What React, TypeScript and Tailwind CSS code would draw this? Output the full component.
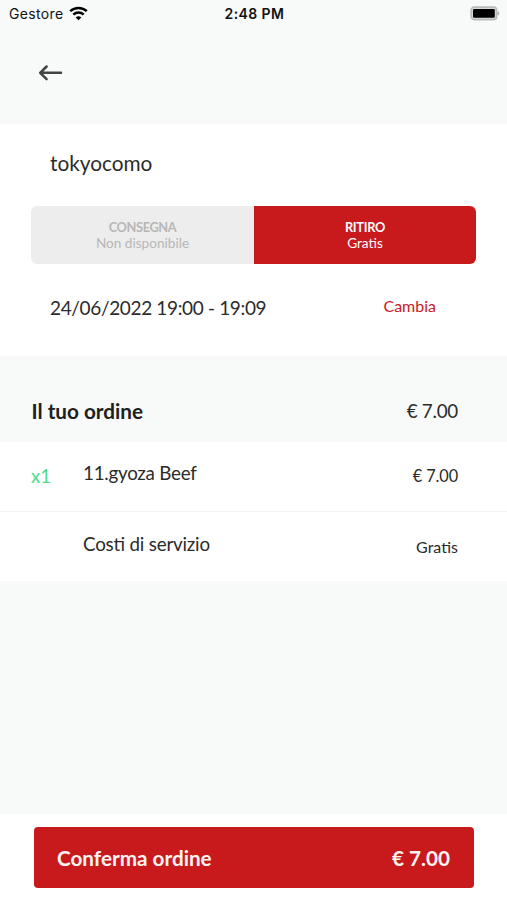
import React from "react";

function StatusBar() {
  return (
    <header className="grid h-7 grid-cols-3 items-center pr-[7px] pl-[9px] font-['Inter',sans-serif] text-[#111]">
      <div className="flex items-center gap-[5px] text-[14px] leading-5 tracking-[0.35px]">
        <span>Gestore</span>
        <svg className="-mt-[2px]" width="19" height="15" viewBox="0 0 19 15" fill="none" stroke="#000" strokeWidth="2.5">
          <path d="M1.2 5.2C5.9.9 13.1.9 17.8 5.2" />
          <path d="M4.3 8.6c3-2.8 7.4-2.8 10.4 0" />
          <path d="M6.7 11.4c1.7-1.5 3.9-1.5 5.6 0L9.5 14.2z" fill="#000" stroke="none" />
        </svg>
      </div>
      <div className="-mt-px text-center text-[14px] font-semibold tracking-[0.4px] whitespace-nowrap">2:48 PM</div>
      <div className="-mt-[2px] flex justify-end">
        <svg width="30" height="15" viewBox="0 0 30 15">
          <rect x="1.2" y="1.2" width="25.4" height="12.4" rx="3" fill="#d9dbda" stroke="#b9bbba" strokeWidth="1.7" />
          <rect x="3" y="3" width="21.8" height="8.8" rx="1.2" />
          <path d="M27.5 5.2c2.5.7 2.5 3.7 0 4.4z" fill="#b2b4b3" />
        </svg>
      </div>
    </header>
  );
}

export default function App() {
  return (
    <main className="flex h-[900px] w-[507px] flex-col overflow-hidden bg-[#f7faf9] font-['Lato',sans-serif] text-[#2b2b2b] [font-feature-settings:'liga'_1]">
      <StatusBar />
      <nav className="h-24 pt-[36px] pl-[38px]">
        <svg width="25" height="18" viewBox="0 0 25 18" fill="none" stroke="#424242" strokeWidth="2.5" strokeLinecap="round" strokeLinejoin="round">
          <path d="M23 8.8H2.2M8.6 2.5 2.2 8.8l6.4 6.4" />
        </svg>
      </nav>
      <section className="h-[232px] bg-white pt-[25px]">
        <h1 className="pl-[50px] text-[20.8px] leading-7">tokyocomo</h1>
        <div className="mt-[29px] ml-[31px] flex h-[58px] w-[445px] overflow-hidden rounded-md text-center leading-4">
          <div className="w-[223px] bg-[#ededed] pt-[13px] text-[#b7b7b7]">
            <b className="block text-[12.8px] tracking-[-0.4px]">CONSEGNA</b>
            <span className="block text-[13.6px]">Non disponibile</span>
          </div>
          <div className="flex-1 bg-[#c8191d] pt-[13px] text-white">
            <b className="block text-[12.8px] tracking-[-0.3px]">RITIRO</b>
            <span className="block text-[13.6px]">Gratis</span>
          </div>
        </div>
        <div className="mt-[30px] flex justify-between pr-[71px] pl-[50px] leading-7">
          <span className="text-[19px] tracking-[-0.35px]">24/06/2022 19:00 - 19:09</span>
          <span className="-mt-[2px] text-[16px]/[28px] text-[#c8191d]">Cambia</span>
        </div>
      </section>
      <section>
        <div className="flex h-[86px] items-end justify-between pr-[49px] pb-[17px] pl-[31.5px] leading-7">
          <h2 className="text-[20.7px] font-bold text-[#202020]">Il tuo ordine</h2>
          <span className="text-[18.8px] tracking-[-0.25px]">€ 7.00</span>
        </div>
        <div className="flex h-[70px] border-b border-[#f1f2f2] bg-white pt-[17px] pr-[49px] pl-[31px] leading-7">
          <span className="w-[52px] pt-[3px] text-[18.5px] text-[#4cda8c]">x1</span>
          <span className="flex-1 text-[18.8px] tracking-[-0.25px]">11.gyoza Beef</span>
          <span className="pt-[3px] text-[16.3px] tracking-[-0.1px]">€ 7.00</span>
        </div>
        <div className="flex h-[69px] justify-between bg-white pt-[18px] pr-[49px] pl-[83px] leading-7">
          <span className="text-[18.8px] tracking-[-0.2px]">Costi di servizio</span>
          <span className="pt-[3px] text-[16px]">Gratis</span>
        </div>
      </section>
      <footer className="mt-auto h-[86px] bg-white px-[34px] pt-[13px]">
        <button className="flex h-[61px] w-[440px] items-center justify-between rounded-[4px] bg-[#c8191d] pt-[2px] pr-6 pl-[23px] text-[20.7px] font-bold text-[#fff4f2]">
          <span>Conferma ordine</span><span>€ 7.00</span>
        </button>
      </footer>
    </main>
  );
}
